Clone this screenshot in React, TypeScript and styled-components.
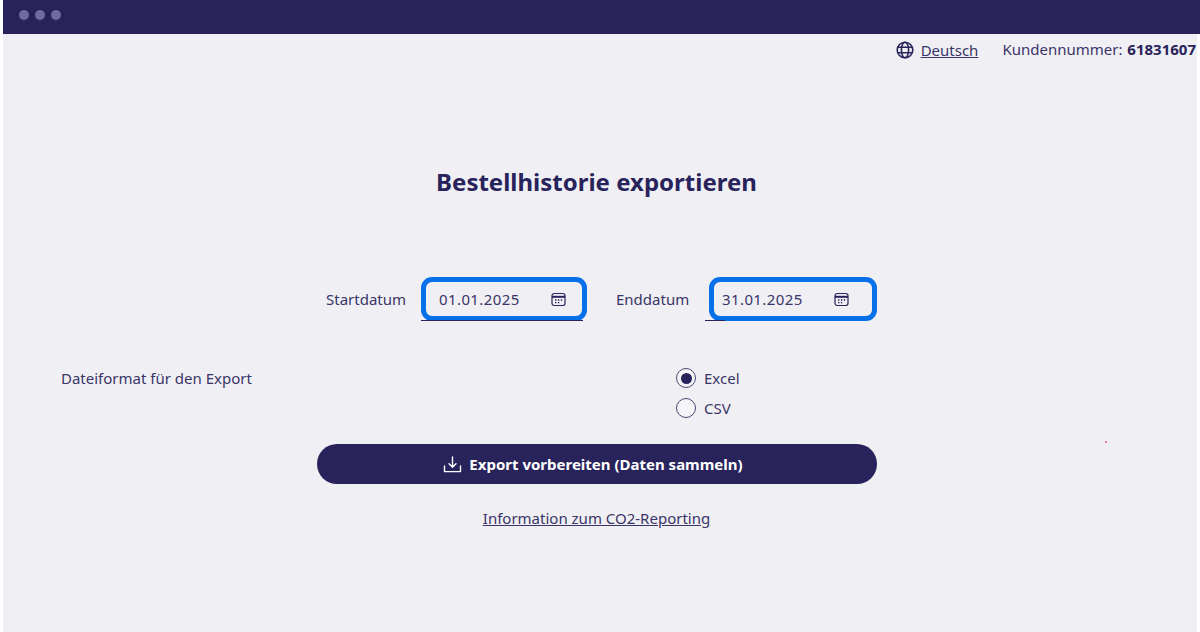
import React from "react";
import styled, { createGlobalStyle } from "styled-components";

const Global = createGlobalStyle`
  html, body { margin: 0; padding: 0; background: #fff; }
  body { font-family: "Noto Sans", "Open Sans", sans-serif; color: #29235c; }
`;

const Page = styled.div`
  position: relative;
  width: 1200px;
  height: 632px;
  overflow: hidden;
  padding-left: 3px;
  box-sizing: border-box;
  display: flex;
  flex-direction: column;
`;

const WindowBar = styled.div`
  height: 34px;
  flex: none;
  margin-right: -3px;
  background: #29235c;
  display: flex;
  align-items: center;
  gap: 6px;
  padding: 0 0 4px 16px;
  box-sizing: border-box;
`;

const Dot = styled.span`
  width: 10px;
  height: 10px;
  border-radius: 50%;
  background: #716c9f;
`;

const Content = styled.main`
  flex: 1;
  width: 1194px;
  background: #f0f0f4;
  display: flex;
  flex-direction: column;
`;

const TopLine = styled.div`
  display: flex;
  justify-content: flex-end;
  align-items: center;
  height: 31px;
  padding-right: 1px;
  font-size: 15px;
  color: #3a3568;
`;

const LangLink = styled.a`
  display: flex;
  align-items: center;
  gap: 7px;
  margin-right: 24px;
  text-decoration: underline;
  color: #3a3568;
`;

const Customer = styled.span`
  white-space: nowrap;
  margin-top: -1px;
  strong { font-weight: 700; color: #29235c; margin-left: 1px; }
`;

const Title = styled.h1`
  margin: 99px 0 0;
  height: 36px;
  line-height: 36px;
  font-size: 24px;
  font-weight: 700;
  text-align: center;
  padding-right: 7px;
  color: #29235c;
`;

const DateRow = styled.div`
  margin-top: 77px;
  display: flex;
  align-items: center;
  padding-left: 323px;
  height: 44px;
  font-size: 15px;
  color: #3a3568;
`;

const DateLabel = styled.label<{ $width: number }>`
  width: ${(p) => p.$width}px;
  flex: none;
`;

const DateField = styled.div<{ $width: number; $gap: number; $left: number; $right: number }>`
  position: relative;
  width: ${(p) => p.$width}px;
  height: 44px;
  margin-right: ${(p) => p.$gap}px;
  flex: none;
  border: 5px solid #0870e8;
  border-radius: 11px;
  box-sizing: border-box;
  display: flex;
  align-items: center;
  justify-content: space-between;
  padding: 0 ${(p) => p.$right}px 0 ${(p) => p.$left}px;
  font-size: 15px;
  letter-spacing: 0.4px;
  color: #3a3568;
  background: #f0f0f4;
`;

const Underline = styled.span<{ $left: number; $width: number }>`
  position: absolute;
  left: ${(p) => p.$left}px;
  bottom: -5px;
  width: ${(p) => p.$width}px;
  height: 1px;
  background: #29235c;
`;

const FormatRow = styled.div`
  margin-top: 47px;
  display: flex;
  padding-left: 58px;
  font-size: 15px;
  color: #3a3568;
`;

const FormatLabel = styled.div`
  width: 615px;
  flex: none;
  line-height: 30px;
  margin-top: -5px;
`;

const RadioGroup = styled.div`
  display: flex;
  flex-direction: column;
  gap: 10px;
`;

const RadioRow = styled.label`
  display: flex;
  align-items: center;
  gap: 8px;
  height: 20px;
  line-height: 26px;
`;

const Radio = styled.span<{ $checked?: boolean }>`
  width: 20px;
  height: 20px;
  box-sizing: border-box;
  border-radius: 50%;
  border: 1px solid #4a4673;
  background: #f5f5f8;
  display: flex;
  align-items: center;
  justify-content: center;
  &::after {
    content: "";
    display: ${(p) => (p.$checked ? "block" : "none")};
    width: 11px;
    height: 11px;
    border-radius: 50%;
    background: #29235c;
  }
`;

const ExportButton = styled.button`
  align-self: flex-start;
  margin: 26px 0 0 314px;
  width: 560px;
  height: 40px;
  border: 0;
  border-radius: 20px;
  background: #29235c;
  color: #fff;
  font-family: inherit;
  font-size: 15px;
  font-weight: 700;
  display: flex;
  align-items: center;
  justify-content: center;
  gap: 7px;
  padding: 0 8px 0 0;
`;

const InfoLink = styled.a`
  margin-top: 24px;
  align-self: center;
  margin-right: 7px;
  font-size: 15px;
  line-height: 20px;
  color: #3a3568;
  text-decoration: underline;
`;

const Speck = styled.span`
  position: absolute;
  left: 1105px;
  top: 441px;
  width: 2px;
  height: 2px;
  background: #e8606a;
  border-radius: 50%;
`;

const CalendarIcon = () => (
  <svg width="15" height="15" viewBox="0 0 15 15" fill="none" stroke="#29235c" strokeWidth="1.2">
    <rect x="1" y="1.5" width="13" height="12" rx="2.2" />
    <path d="M1 4.8h13" strokeWidth="2" />
    <path d="M4 8h1.4M6.9 8h1.4M9.8 8h1.4M4 10.6h1.4M6.9 10.6h1.4" strokeWidth="1.4" />
  </svg>
);

const GlobeIcon = () => (
  <svg width="18" height="18" viewBox="0 0 18 18" fill="none" stroke="#29235c" strokeWidth="1.6">
    <circle cx="9" cy="9" r="7.8" />
    <ellipse cx="9" cy="9" rx="3.6" ry="7.8" />
    <path d="M1.8 6.2h14.4M1.8 11.8h14.4" />
  </svg>
);

const DownloadIcon = () => (
  <svg width="19" height="19" viewBox="0 0 19 19" fill="none" stroke="#fff" strokeWidth="1.4" strokeLinecap="round" strokeLinejoin="round">
    <path d="M9.5 2v10M6 8.8l3.5 3.5 3.5-3.5" />
    <path d="M1.5 11v5.6h3M17.5 11v5.6h-3M4.5 16.6h10" />
  </svg>
);

export default function App() {
  return (
    <>
      <Global />
      <Page>
        <WindowBar>
          <Dot />
          <Dot />
          <Dot />
        </WindowBar>
        <Content>
          <TopLine>
            <LangLink>
              <GlobeIcon />
              Deutsch
            </LangLink>
            <Customer>
              Kundennummer: <strong>61831607</strong>
            </Customer>
          </TopLine>
          <Title>Bestellhistorie exportieren</Title>
          <DateRow>
            <DateLabel $width={95}>Startdatum</DateLabel>
            <DateField $width={166} $gap={29} $left={13} $right={16}>
              01.01.2025
              <CalendarIcon />
              <Underline $left={-5} $width={162} />
            </DateField>
            <DateLabel $width={93}>Enddatum</DateLabel>
            <DateField $width={168} $gap={0} $left={8} $right={23}>
              31.01.2025
              <CalendarIcon />
              <Underline $left={-9} $width={20} />
            </DateField>
          </DateRow>
          <FormatRow>
            <FormatLabel>Dateiformat für den Export</FormatLabel>
            <RadioGroup>
              <RadioRow>
                <Radio $checked />
                Excel
              </RadioRow>
              <RadioRow>
                <Radio />
                CSV
              </RadioRow>
            </RadioGroup>
          </FormatRow>
          <ExportButton>
            <DownloadIcon />
            Export vorbereiten (Daten sammeln)
          </ExportButton>
          <InfoLink>Information zum CO2-Reporting</InfoLink>
        </Content>
        <Speck />
      </Page>
    </>
  );
}
